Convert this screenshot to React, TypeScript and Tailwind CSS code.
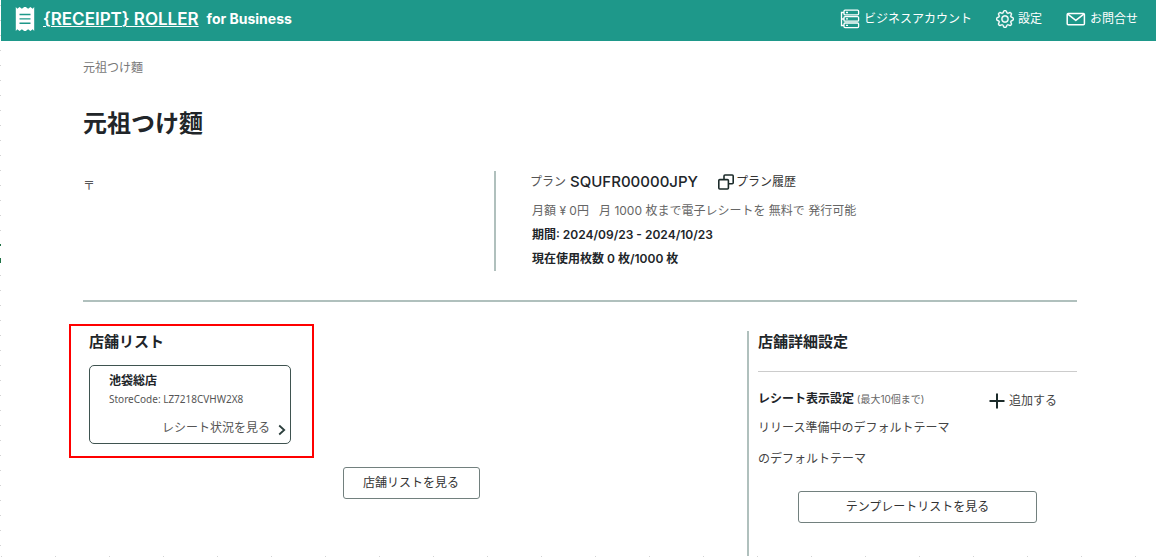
import type { ReactNode } from "react";

function ReceiptLogo() {
  return (
    <svg viewBox="0 0 20 24" className="h-6 w-5 shrink-0" aria-hidden="true">
      <path
        fill="#fff"
        d="M.8 0l1.500 1.800L4.600 0l2.300 1.800L9.200 0h1.600l2.300 1.800L15.400 0l2.300 1.800L19.200 0v24l-1.500-1.800-2.300 1.800-2.300-1.800-2.300 1.800H9.200l-2.300-1.800L4.600 24l-2.300-1.800L.8 24z"
      />
      <path stroke="#1e988a" strokeWidth="1.400" d="M4.500 7.500h11M4.500 11.900h11M4.500 16.300h11" />
    </svg>
  );
}

function ServerIcon() {
  return (
    <svg viewBox="0 0 20 20" className="h-5 w-5 shrink-0" fill="none" stroke="#fff" strokeWidth="1.3" aria-hidden="true">
      <rect x="4" y="1.2" width="14.6" height="4.6" rx="1" />
      <rect x="4" y="7.6" width="14.6" height="4.6" rx="1" />
      <rect x="4" y="14" width="14.6" height="4.6" rx="1" />
      <path d="M4 3.5H1.5v13H4M1.5 10H4M6 3.5h2M6 9.9h2M6 16.3h2" />
    </svg>
  );
}

function GearIcon() {
  return (
    <svg viewBox="0 0 16 16" className="h-[18px] w-[18px] shrink-0" fill="#fff" stroke="#fff" strokeWidth=".3" aria-hidden="true">
      <path d="M8 4.754a3.246 3.246 0 1 0 0 6.492 3.246 3.246 0 0 0 0-6.492M5.754 8a2.246 2.246 0 1 1 4.492 0 2.246 2.246 0 0 1-4.492 0" />
      <path d="M9.796 1.343c-.527-1.79-3.065-1.79-3.592 0l-.094.319a.873.873 0 0 1-1.255.52l-.292-.16c-1.64-.892-3.433.902-2.54 2.541l.159.292a.873.873 0 0 1-.52 1.255l-.319.094c-1.79.527-1.79 3.065 0 3.592l.319.094a.873.873 0 0 1 .52 1.255l-.16.292c-.892 1.64.901 3.434 2.541 2.54l.292-.159a.873.873 0 0 1 1.255.52l.094.319c.527 1.79 3.065 1.79 3.592 0l.094-.319a.873.873 0 0 1 1.255-.52l.292.16c1.64.893 3.434-.902 2.54-2.541l-.159-.292a.873.873 0 0 1 .52-1.255l.319-.094c1.79-.527 1.79-3.065 0-3.592l-.319-.094a.873.873 0 0 1-.52-1.255l.16-.292c.893-1.64-.902-3.433-2.541-2.54l-.292.159a.873.873 0 0 1-1.255-.52zm-2.633.283c.246-.835 1.428-.835 1.674 0l.094.319a1.873 1.873 0 0 0 2.693 1.115l.291-.16c.764-.415 1.6.42 1.184 1.185l-.159.292a1.873 1.873 0 0 0 1.116 2.692l.318.094c.835.246.835 1.428 0 1.674l-.319.094a1.873 1.873 0 0 0-1.115 2.693l.16.291c.415.764-.42 1.6-1.185 1.184l-.291-.159a1.873 1.873 0 0 0-2.693 1.116l-.094.318c-.246.835-1.428.835-1.674 0l-.094-.319a1.873 1.873 0 0 0-2.692-1.115l-.292.16c-.764.415-1.6-.42-1.184-1.185l.159-.291A1.873 1.873 0 0 0 1.945 8.93l-.319-.094c-.835-.246-.835-1.428 0-1.674l.319-.094A1.873 1.873 0 0 0 3.06 4.377l-.16-.292c-.415-.764.42-1.6 1.185-1.184l.292.159a1.873 1.873 0 0 0 2.692-1.115z" />
    </svg>
  );
}

function MailIcon() {
  return (
    <svg viewBox="0 0 20 14" className="h-[14px] w-5 shrink-0" fill="none" stroke="#fff" strokeWidth="1.5" strokeLinejoin="round" aria-hidden="true">
      <rect x="1.2" y="1.5" width="17.2" height="11.2" rx="1" />
      <path d="M1.8 2.2l8 6.2 8-6.2" />
    </svg>
  );
}

function CopyIcon() {
  return (
    <svg viewBox="0 0 16 16" className="h-4 w-4 shrink-0" fill="none" stroke="#1c2b2a" strokeWidth="1.6" strokeLinejoin="round" aria-hidden="true">
      <path d="M6 5.500V2a1 1 0 0 1 1-1h7.200a1 1 0 0 1 1 1v6.800a1 1 0 0 1-1 1H10.500" />
      <rect x=".8" y="5.600" width="9.600" height="9.400" rx="1" />
    </svg>
  );
}

function PlusIcon() {
  return (
    <svg viewBox="0 0 16 16" className="h-4 w-4 shrink-0" fill="none" stroke="#1c2b2a" strokeWidth="2" aria-hidden="true">
      <path d="M8 .5v15M.5 8h15" />
    </svg>
  );
}

function ChevronIcon() {
  return (
    <svg viewBox="0 0 8 12" className="mt-1 h-3 w-2 shrink-0" fill="none" stroke="#2c3f3d" strokeWidth="1.8" aria-hidden="true">
      <path d="M1.200 1.500L6.200 6l-5 4.500" />
    </svg>
  );
}

function NavLink({ icon, children }: { icon: ReactNode; children: ReactNode }) {
  return (
    <a href="#" className="flex items-center gap-1 text-xs text-white">
      {icon}
      {children}
    </a>
  );
}

export default function App() {
  return (
    <div className="flex min-h-screen bg-white font-['Inter','Noto_Sans_CJK_JP',sans-serif] text-xs text-[#555]">
      <div className="flex w-px shrink-0 flex-col bg-[repeating-linear-gradient(to_bottom,#fff_0px,#fff_5px,#d4d4d4_5px,#d4d4d4_6px,#fff_6px,#fff_15px)] pt-[244px]">
        <div className="h-[2px] bg-[#217346]" />
        <div className="mt-3 h-[5px] bg-[#217346]" />
      </div>

      <div className="flex min-w-0 flex-1 flex-col">
        <header className="flex h-[41px] items-center justify-between bg-[#1e988a] pr-[18px] pl-[14px] text-white">
          <div className="flex items-center pb-1">
            <ReceiptLogo />
            <a href="#" className="ml-2 text-[17px] leading-6 font-semibold underline decoration-1 underline-offset-1">
              {"{RECEIPT} ROLLER"}
            </a>
            <span className="ml-2 text-sm leading-6 font-bold">for Business</span>
          </div>
          <nav className="flex items-center gap-6 pb-[3px]">
            <NavLink icon={<ServerIcon />}>ビジネスアカウント</NavLink>
            <NavLink icon={<GearIcon />}>設定</NavLink>
            <NavLink icon={<MailIcon />}>お問合せ</NavLink>
          </nav>
        </header>

        <main className="flex flex-1 flex-col pr-[79px] pl-[82px]">
          <p className="mt-[17px] leading-5 text-[#777]">元祖つけ麵</p>
          <h1 className="mt-7 text-2xl leading-9 font-bold text-[#212529]">元祖つけ麵</h1>

          <section className="mt-[29px] grid grid-cols-[411fr_583fr]">
            <p className="pt-[5px] leading-5">〒</p>
            <div className="border-l-2 border-[#b0c0bd] pl-[34px]">
              <div className="mb-[6px] flex h-[22px] items-center">
                <span>プラン</span>
                <strong className="ml-1 text-[15px] leading-5 font-medium text-[#212529]">SQUFR00000JPY</strong>
                <a href="#" className="ml-5 flex items-center gap-[2px] text-[#333]">
                  <CopyIcon />
                  プラン履歴
                </a>
              </div>
              <div className="pl-[2px] leading-6">
                <p className="whitespace-pre text-[#666]">{"月額 ¥ 0円   月 1000 枚まで電子レシートを 無料で 発行可能"}</p>
                <p className="font-semibold text-[#212529]">期間: 2024/09/23 - 2024/10/23</p>
                <p className="font-semibold text-[#212529]">現在使用枚数 0 枚/1000 枚</p>
              </div>
            </div>
          </section>

          <hr className="mt-[29px] border-t-2 border-[#b0c0bd]" />

          <div className="grid flex-1 grid-cols-[656fr_330fr] gap-2">
            <section className="mt-[22px]">
              <div className="-ml-[14px] w-[245px] border-2 border-[#f00] px-[18px] pt-[6px] pb-3">
                <h2 className="text-[15px] leading-5 font-bold text-[#212529]">店舗リスト</h2>
                <article className="mt-[13px] w-[202px] rounded-[5px] border border-[#3f5350] pt-[5px] pr-1 pb-[5px] pl-[19px]">
                  <h3 className="leading-5 font-bold text-[#212529]">池袋総店</h3>
                  <p className="font-['Noto_Sans',sans-serif] text-[10px] leading-4">StoreCode: LZ7218CVHW2X8</p>
                  <a href="#" className="mt-[11px] flex items-center justify-end gap-2 leading-5">
                    レシート状況を見る
                    <ChevronIcon />
                  </a>
                </article>
              </div>
              <div className="mt-[9px] flex justify-center">
                <button type="button" className="h-8 w-[137px] rounded-[3px] border border-[#72807e] text-[#333]">
                  店舗リストを見る
                </button>
              </div>
            </section>

            <section className="mt-[29px] border-l-2 border-[#b0c0bd] pl-[9px]">
              <h2 className="pt-px text-[15px] leading-5 font-bold text-[#212529]">店舗詳細設定</h2>
              <hr className="mt-[19px] border-[#ccc]" />
              <div className="mt-[17px] flex items-center justify-between pr-5">
                <h3 className="leading-5 font-bold text-[#212529]">
                  レシート表示設定 <small className="text-[10px] font-normal text-[#666]">(最大10個まで)</small>
                </h3>
                <button type="button" className="flex items-center gap-1 pt-1 text-[#444]">
                  <PlusIcon />
                  追加する
                </button>
              </div>
              <p className="mt-[9px] leading-5 text-[#444]">リリース準備中のデフォルトテーマ</p>
              <p className="mt-[11px] leading-5 text-[#444]">のデフォルトテーマ</p>
              <button type="button" className="mx-auto mt-[22px] block h-8 w-3/4 rounded-[3px] border border-[#72807e] text-[#333]">
                テンプレートリストを見る
              </button>
            </section>
          </div>
        </main>
        <div className="h-px bg-[repeating-linear-gradient(to_right,#d4d4d4_0px,#d4d4d4_1px,#fff_1px,#fff_54px)]" />
      </div>
    </div>
  );
}
